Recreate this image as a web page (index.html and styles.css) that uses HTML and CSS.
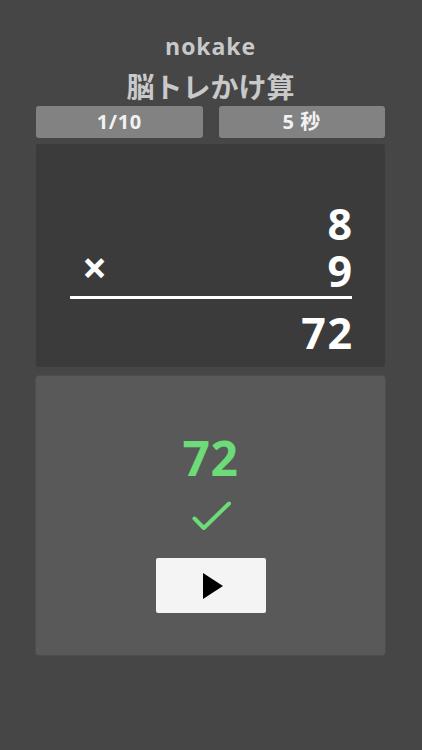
FILE: index.html
```html
<!DOCTYPE html>
<html lang="ja">
<head>
<meta charset="utf-8">
<title>nokake</title>
<link rel="stylesheet" href="styles.css">
</head>
<body>
<main class="app">
  <header class="head">
    <h1 class="brand">nokake</h1>
    <h2 class="title">脳トレかけ算</h2>
  </header>

  <div class="status">
    <div class="pill">1/10</div>
    <div class="pill">5 秒</div>
  </div>

  <section class="problem">
    <div class="row"><span class="num">8</span></div>
    <div class="row"><span class="op">×</span><span class="num">9</span></div>
    <div class="rule"></div>
    <div class="row"><span class="num">72</span></div>
  </section>

  <section class="answer">
    <div class="given">72</div>
    <svg class="check" width="44" height="36" viewBox="0 0 44 36" aria-hidden="true">
      <path d="M5.5 20.5 L14.8 30 L40 5.5" fill="none" stroke="#6cdb78" stroke-width="4" stroke-linecap="round" stroke-linejoin="round"/>
    </svg>
    <button class="next" type="button" aria-label="次へ">
      <svg width="20" height="26" viewBox="0 0 20 26" aria-hidden="true">
        <path d="M0 0 L20 13 L0 26 Z" fill="#000"/>
      </svg>
    </button>
  </section>
</main>
</body>
</html>
```

FILE: styles.css
```css
* {
  box-sizing: border-box;
}

html, body {
  margin: 0;
  padding: 0;
}

body {
  background: #464646;
  font-family: "Open Sans", "Noto Sans CJK JP", sans-serif;
  color: #cccccc;
  width: 422px;
  height: 750px;
  overflow: hidden;
}

.app {
  display: flex;
  flex-direction: column;
  padding: 31px 37px 0 36px;
}

.head {
  display: flex;
  flex-direction: column;
  align-items: center;
}

.brand {
  margin: 0;
  font-size: 23px;
  line-height: 30px;
  font-weight: 700;
  letter-spacing: 0.9px;
  color: #c9c9c9;
}

.title {
  margin: 7px 0 0;
  font-family: "Noto Sans CJK JP", sans-serif;
  font-size: 28px;
  line-height: 36px;
  font-weight: 700;
  color: #c9c9c9;
}

.status {
  margin-top: 2px;
  display: grid;
  grid-template-columns: 1fr 1fr;
  gap: 16px;
}

.pill {
  height: 32px;
  background: #828282;
  border-radius: 3px;
  color: #f2f2f2;
  font-size: 20px;
  font-weight: 700;
  line-height: 32px;
  text-align: center;
  letter-spacing: 0.6px;
}

.problem {
  margin-top: 6px;
  height: 223px;
  background: #3b3b3b;
  border-radius: 3px;
  padding: 56px 33px 0 34px;
  color: #ffffff;
}

.row {
  display: flex;
  justify-content: space-between;
  align-items: baseline;
  height: 47px;
  font-size: 43px;
  line-height: 47px;
  font-weight: 700;
}

.row .num {
  margin-left: auto;
  letter-spacing: 1.5px;
  margin-right: -1.5px;
}

.op {
  font-size: 44px;
  font-weight: 700;
  padding-left: 12px;
  position: relative;
  top: -3px;
}

.rule {
  margin: 2px 0 10px;
  height: 3px;
  background: #ffffff;
}

.answer {
  margin-top: 9px;
  height: 279px;
  background: #5a5959;
  border-radius: 3px;
  box-shadow: 0 0 0 1px #4d4d4d;
  display: flex;
  flex-direction: column;
  align-items: center;
  padding-top: 57px;
}

.given {
  font-size: 48px;
  line-height: 50px;
  font-weight: 700;
  letter-spacing: 0.5px;
  color: #6cdb78;
}

.check {
  display: block;
  margin-top: 15px;
}

.next {
  margin-top: 24px;
  width: 110px;
  height: 55px;
  border: none;
  border-radius: 2px;
  background: #f4f4f4;
  display: flex;
  align-items: center;
  justify-content: center;
  padding: 0 0 0 4px;
}

.next svg {
  display: block;
}
```
